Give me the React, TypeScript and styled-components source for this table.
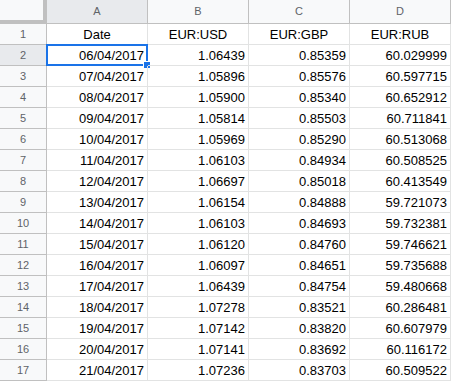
import {Fragment} from "react";
import styled, {createGlobalStyle} from "styled-components";

const GlobalStyle = createGlobalStyle`
  body {
    margin: 0;
    background: #ffffff;
    font-family: "Liberation Sans", Arial, sans-serif;
  }
`;

const rows: string[][] = [
  ["06/04/2017", "1.06439", "0.85359", "60.029999"],
  ["07/04/2017", "1.05896", "0.85576", "60.597715"],
  ["08/04/2017", "1.05900", "0.85340", "60.652912"],
  ["09/04/2017", "1.05814", "0.85503", "60.711841"],
  ["10/04/2017", "1.05969", "0.85290", "60.513068"],
  ["11/04/2017", "1.06103", "0.84934", "60.508525"],
  ["12/04/2017", "1.06697", "0.85018", "60.413549"],
  ["13/04/2017", "1.06154", "0.84888", "59.721073"],
  ["14/04/2017", "1.06103", "0.84693", "59.732381"],
  ["15/04/2017", "1.06120", "0.84760", "59.746621"],
  ["16/04/2017", "1.06097", "0.84651", "59.735688"],
  ["17/04/2017", "1.06439", "0.84754", "59.480668"],
  ["18/04/2017", "1.07278", "0.83521", "60.286481"],
  ["19/04/2017", "1.07142", "0.83820", "60.607979"],
  ["20/04/2017", "1.07141", "0.83692", "60.116172"],
  ["21/04/2017", "1.07236", "0.83703", "60.509522"],
];

const columns = ["A", "B", "C", "D"];
const titles = ["Date", "EUR:USD", "EUR:GBP", "EUR:RUB"];

const Sheet = styled.div`
  display: grid;
  grid-template-columns: 47px repeat(4, 101px);
  grid-auto-rows: 21px;
  grid-template-rows: 24px;
  width: 452px;
  height: 382px;
  overflow: hidden;
  font-family: "Liberation Sans", Arial, sans-serif;
`;

const Corner = styled.div`
  box-sizing: border-box;
  background: #f8f9fa;
  border-right: 4px solid #c0c0c0;
  border-bottom: 4px solid #c0c0c0;
`;

const ColHeader = styled.div<{$active?: boolean}>`
  box-sizing: border-box;
  display: flex;
  align-items: center;
  justify-content: center;
  padding-bottom: 2px;
  background: ${(p) => (p.$active ? "#e8eaed" : "#f8f9fa")};
  border-right: 1px solid #c0c0c0;
  border-bottom: 1px solid #c0c0c0;
  color: #5f6368;
  font-size: 11px;
`;

const RowHeader = styled.div<{$active?: boolean}>`
  box-sizing: border-box;
  display: flex;
  align-items: center;
  justify-content: center;
  background: ${(p) => (p.$active ? "#e8eaed" : "#f8f9fa")};
  border-right: 1px solid #c0c0c0;
  border-bottom: 1px solid #c0c0c0;
  color: #5f6368;
  font-size: 11px;
`;

const Cell = styled.div<{$center?: boolean}>`
  position: relative;
  box-sizing: border-box;
  display: flex;
  align-items: center;
  justify-content: ${(p) => (p.$center ? "center" : "flex-end")};
  padding: 0 3px;
  border-right: 1px solid #e2e3e3;
  border-bottom: 1px solid #e2e3e3;
  color: #000000;
  font-size: 13px;
  white-space: nowrap;
`;

const Selection = styled.div`
  position: absolute;
  top: -1px;
  left: -1px;
  right: -1px;
  bottom: -1px;
  border: 2px solid #1a73e8;
  pointer-events: none;
`;

const Handle = styled.div`
  position: absolute;
  right: -5px;
  bottom: -5px;
  width: 6px;
  height: 6px;
  background: #1a73e8;
  border: 1px solid #ffffff;
`;

export default function App() {
  return (
    <>
      <GlobalStyle />
      <Sheet>
        <Corner />
        {columns.map((c, i) => (
          <ColHeader key={c} $active={i === 0}>
            {c}
          </ColHeader>
        ))}
        <RowHeader>1</RowHeader>
        {titles.map((t) => (
          <Cell key={t} $center>
            {t}
          </Cell>
        ))}
        {rows.map((r, i) => (
          <Fragment key={r[0]}>
            <RowHeader $active={i === 0}>{i + 2}</RowHeader>
            {r.map((v, j) => (
              <Cell key={j}>
                {v}
                {i === 0 && j === 0 && (
                  <Selection>
                    <Handle />
                  </Selection>
                )}
              </Cell>
            ))}
          </Fragment>
        ))}
      </Sheet>
    </>
  );
}
